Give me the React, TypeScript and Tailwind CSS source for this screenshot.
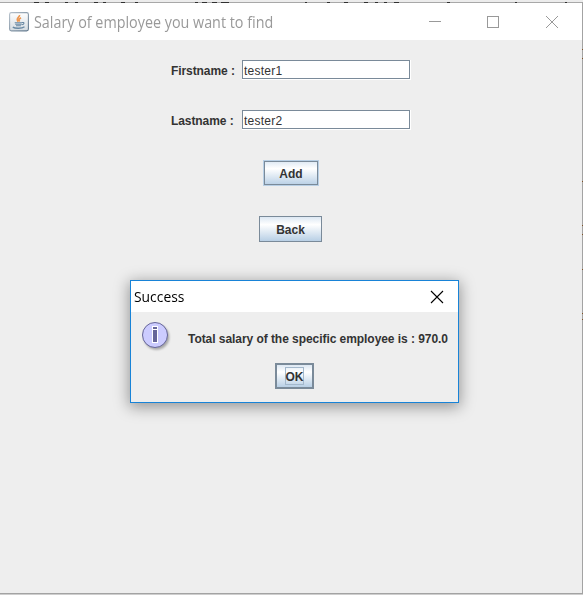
import React from "react";

const topMarks: [number, number][] = [
  [34, 5], [45, 4], [65, 3], [75, 3], [94, 4], [103, 3], [121, 4], [135, 3],
  [195, 3], [202, 5], [212, 5], [221, 8], [305, 2], [327, 3], [344, 4],
  [364, 4], [375, 3], [384, 3], [394, 5], [447, 3], [515, 2], [565, 2],
];
const sideMarks = [49, 58, 181, 225, 234, 269, 313, 319];

function Background() {
  return (
    <svg className="absolute inset-0" width="583" height="595" shapeRendering="crispEdges">
      <rect width="583" height="2" fill="#ececec" />
      <rect y="2" width="583" height="1" fill="#a8a8a8" />
      {topMarks.map(([x, w]) => (
        <rect key={x} x={x} y="2" width={w} height="1" fill="#303030" />
      ))}
      <rect x="582" y="2" width="1" height="593" fill="#a3a3a3" />
      {sideMarks.map((y) => (
        <rect key={y} x="582" y={y} width="1" height="1" fill="#805025" />
      ))}
      <rect y="593" width="583" height="1" fill="#a3a3a3" />
      <rect y="594" width="583" height="1" fill="#cecece" />
    </svg>
  );
}

function JavaIcon() {
  return (
    <svg width="20" height="20" viewBox="0 0 20 20">
      <defs>
        <linearGradient id="tile" x1="0" y1="0" x2="0" y2="1">
          <stop offset="0" stopColor="#ffffff" />
          <stop offset="1" stopColor="#d4dbe1" />
        </linearGradient>
        <linearGradient id="edge" x1="0" y1="0" x2="1" y2="1">
          <stop offset="0" stopColor="#b5c0ca" />
          <stop offset="1" stopColor="#60778c" />
        </linearGradient>
      </defs>
      <rect x="0.6" y="0.6" width="18.8" height="18.3" rx="1.8" fill="url(#tile)" stroke="url(#edge)" strokeWidth="1.1" />
      <path d="M10.500 3C11.300 5 6 6 9.200 9.700M12 5.700C9.800 7 9.500 8 10.700 9.500" fill="none" stroke="#ed964f" strokeWidth="1.6" />
      <path d="M5.700 10.700h7.400M6.200 12.300h6.300M7 13.800h4.900M13 10.500c2.800-.5 2.400 2-.3 2.300" fill="none" stroke="#6888a3" strokeWidth="1.1" />
      <path d="M3.800 15.100c2.200 1.600 9 1.600 11.700-.3" fill="none" stroke="#6888a3" strokeWidth="1.3" />
    </svg>
  );
}

function InfoIcon() {
  return (
    <svg width="32" height="32" viewBox="0 0 32 32">
      <defs>
        <filter id="soft" x="-20%" y="-20%" width="150%" height="150%">
          <feGaussianBlur stdDeviation="1.2" />
        </filter>
      </defs>
      <circle cx="15.5" cy="16" r="12.800" fill="#777" opacity=".6" filter="url(#soft)" />
      <circle cx="14" cy="14" r="12.500" fill="#ccccff" stroke="#666699" />
      <g shapeRendering="crispEdges">
        <path d="M11 5h6v17h-6z" fill="#fff" />
        <path d="M12 6h4v2h-4zM12 9h4v12h-4z" fill="#666699" />
      </g>
    </svg>
  );
}

function Field({ label, value }: { label: string; value: string }) {
  return (
    <div className="flex h-5 items-center">
      <label className="w-[71px] shrink-0 whitespace-nowrap pt-px text-[12px] leading-4 font-bold tracking-[-0.08px]">{label}</label>
      <div className="h-5 w-[169px] shrink-0 border-r border-b border-white">
        <input
          className="block h-[19px] w-[168px] rounded-none border border-[#7a8a99] bg-white px-px pt-[2px] text-[12px] leading-4 tracking-[0.25px] text-[#333] outline-none"
          defaultValue={value}
        />
      </div>
    </div>
  );
}

const metal = "bg-[linear-gradient(180deg,#dde8f3_0%,#ffffff_32%,#b8cfe5_100%)]";

export default function App() {
  return (
    <div className="relative h-[595px] w-[583px] overflow-hidden bg-[#eee] pt-[3px] font-['Liberation_Sans',Arial,sans-serif] text-[#333]">
      <Background />
      <header className="flex h-[37px] w-[582px] items-center bg-white pl-[9px]">
        <JavaIcon />
        <h1 className="ml-[5px] w-[240px] origin-left scale-x-[0.925] whitespace-nowrap font-['Open_Sans',sans-serif] text-[15.5px] leading-5 font-normal text-[#999]">
          Salary of employee you want to find
        </h1>
        <svg className="mr-[23px] ml-auto" width="131" height="14" viewBox="0 0 131 14" fill="none" stroke="#999">
          <path d="M1 6.500h12M59.500 1.500h11v11h-11z" shapeRendering="crispEdges" />
          <path d="M118 1l12 12M130 1l-12 12" />
        </svg>
      </header>
      <main className="flex h-[553px] w-[581px] flex-col items-center pt-5">
        <div className="ml-px flex w-[240px] flex-col gap-[30px]">
          <Field label="Firstname :" value="tester1" />
          <Field label="Lastname :" value="tester2" />
        </div>
        <button className={`mt-[30px] ml-px h-[26px] w-14 border border-[#b8cfe5] text-[12px] leading-none font-bold ${metal}`}>
          <span className="flex h-6 items-center justify-center border border-[#7a8a99] pt-px">Add</span>
        </button>
        <button className={`mt-[30px] h-[26px] w-[63px] border border-[#7a8a99] pt-px text-[12px] leading-none font-bold ${metal}`}>Back</button>
      </main>
      <section className="absolute top-[280px] left-[130px] h-[123px] w-[329px] border border-[#1883d7] bg-[#eee] shadow-[0_3px_14px_1px_rgba(0,0,0,0.38)]">
        <div className="flex h-[31px] items-center justify-between bg-white pr-[14px] pl-[3px]">
          <h2 className="mb-[2px] origin-left scale-x-[0.925] font-['Open_Sans',sans-serif] text-[15px] leading-5 font-normal text-black">Success</h2>
          <svg width="14" height="14" viewBox="0 0 14 14" fill="none" stroke="#000" strokeWidth="1.1">
            <path d="M1 1l12 12M13 1L1 13" />
          </svg>
        </div>
        <div className="flex h-[51px] pt-[9px] pl-[10px]">
          <InfoIcon />
          <p className="mt-[10px] ml-[15px] whitespace-nowrap text-[12px] leading-4 font-bold tracking-[-0.055px]">
            Total salary of the specific employee is : 970.0
          </p>
        </div>
        <button className={`ml-[144px] flex h-[26px] w-[39px] items-center justify-center border-2 border-[#7a8a99] text-[12px] leading-none font-bold ${metal}`}>
          <span className="flex h-[18px] w-[19px] items-center justify-center border border-[#a3b8cc] pt-[2px]">OK</span>
        </button>
      </section>
    </div>
  );
}
